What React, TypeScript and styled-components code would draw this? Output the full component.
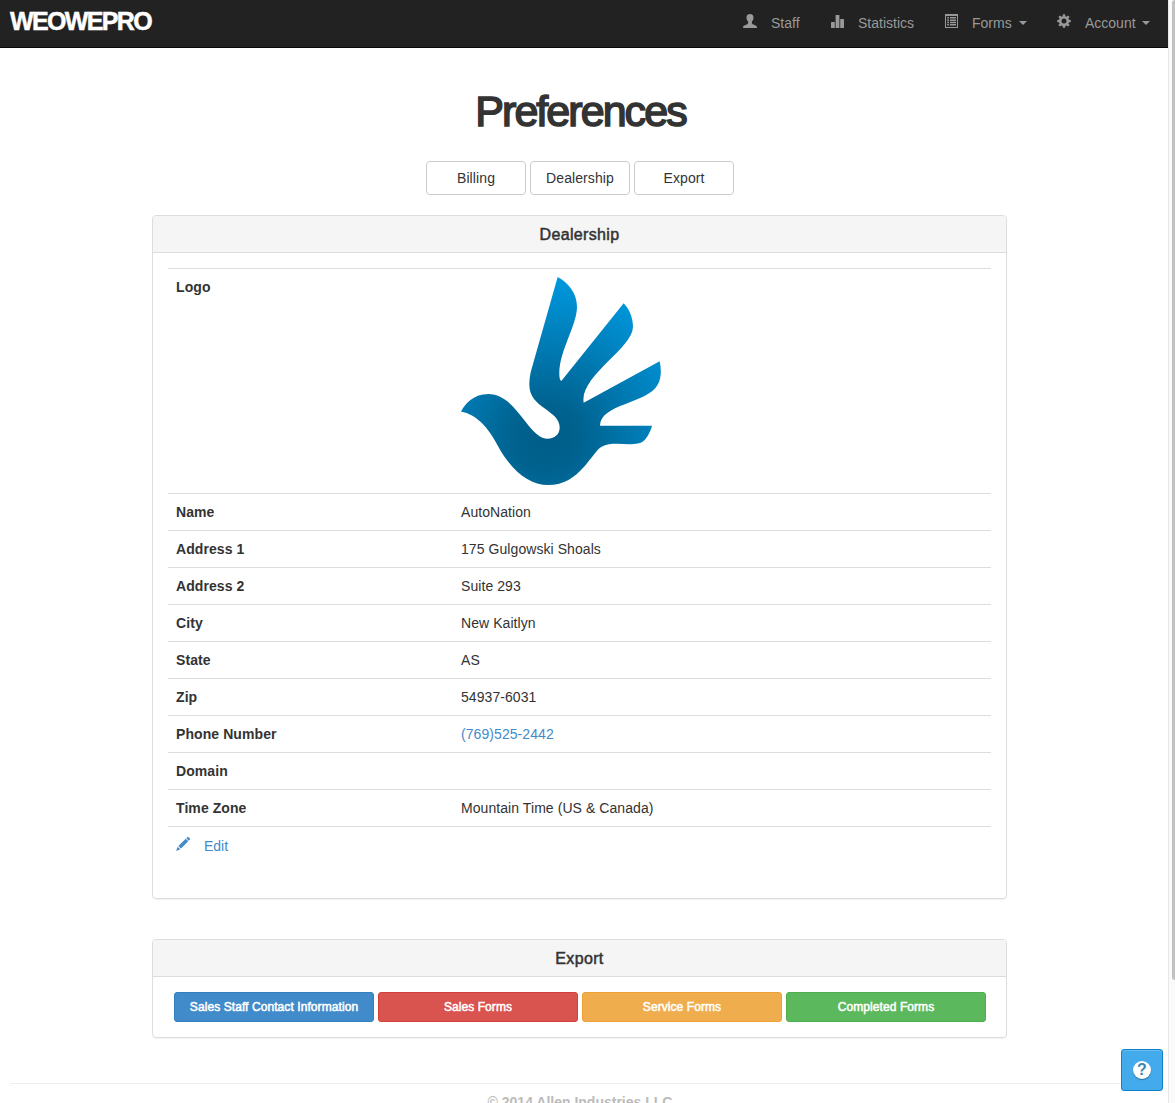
import React from "react";
import styled, { createGlobalStyle } from "styled-components";

const GlobalStyle = createGlobalStyle`
  *, *::before, *::after { box-sizing: border-box; }
  html, body { margin: 0; padding: 0; background: #fff; }
  body {
    overflow: hidden;
    font-family: "Liberation Sans", Arial, sans-serif;
    font-size: 14px;
    line-height: 20px;
    color: #333;
  }
`;

const Screen = styled.div`
  position: relative;
  display: grid;
  grid-template-columns: 1168px 7px;
  width: 1175px;
  height: 1103px;
  overflow: hidden;
`;

const Page = styled.div`
  display: flex;
  flex-direction: column;
  min-width: 0;
`;

const ScrollTrack = styled.div`
  display: flex;
  justify-content: flex-end;
  border-left: 1px solid #e8e8e8;
  background: #fafafa;
`;

const ScrollThumb = styled.div`
  width: 3px;
  height: 980px;
  background: #c1c1c1;
  border-radius: 3px 0 0 3px;
`;

const Navbar = styled.header`
  display: flex;
  flex: none;
  justify-content: space-between;
  height: 48px;
  padding: 0 18px 0 10px;
  background: #222;
  border-bottom: 1px solid #080808;
`;

const Brand = styled.a`
  padding-top: 11px;
  font-size: 25px;
  font-weight: 700;
  letter-spacing: -1.65px;
  color: #fff;
  -webkit-text-stroke: 0.5px #fff;
`;

const Nav = styled.nav`
  display: flex;
  gap: 30px;
`;

const NavItem = styled.a<{ $width: number }>`
  display: flex;
  width: ${(p) => p.$width}px;
  padding-top: 13px;
  color: #999;
  white-space: nowrap;

  svg { flex: none; margin: 1px 14px 0 0; }
`;

const Caret = styled.i`
  width: 8px;
  height: 4px;
  margin: 8px 0 0 auto;
  border: 4px solid transparent;
  border-top-color: currentColor;
  border-bottom: 0;
`;

const Container = styled.main`
  display: flex;
  flex-direction: column;
  align-items: center;
  width: 1140px;
  margin-left: 10px;
`;

const Title = styled.h1`
  margin: 40px 0 0 1px;
  font-size: 43px;
  line-height: 46px;
  font-weight: 400;
  letter-spacing: -1.95px;
  -webkit-text-stroke: 1.6px #333;
`;

const Tabs = styled.div`
  display: flex;
  gap: 4px;
  margin-top: 27px;
`;

const TabButton = styled.button`
  width: 100px;
  height: 34px;
  padding: 0;
  font: inherit;
  letter-spacing: 0.1px;
  color: #333;
  background: #fff;
  border: 1px solid #ccc;
  border-radius: 4px;
`;

const Panel = styled.section<{ $height: number; $top: number }>`
  width: 855px;
  height: ${(p) => p.$height}px;
  margin-top: ${(p) => p.$top}px;
  margin-right: 1px;
  border: 1px solid #ddd;
  border-radius: 4px;
  box-shadow: 0 1px 1px rgba(0, 0, 0, 0.05);
`;

const PanelHeading = styled.h3`
  height: 37px;
  margin: 0;
  padding-top: 9px;
  background: #f5f5f5;
  border-bottom: 1px solid #ddd;
  border-radius: 3px 3px 0 0;
  font-size: 16px;
  font-weight: 400;
  letter-spacing: 0.35px;
  text-align: center;
  -webkit-text-stroke: 0.5px #333;
`;

const Details = styled.dl`
  margin: 15px 15px 0;
`;

const DetailRow = styled.div<{ $height?: number }>`
  display: grid;
  grid-template-columns: 285px 1fr;
  height: ${(p) => p.$height ?? 37}px;
  padding: 8px 8px 0;
  border-top: 1px solid #ddd;
`;

const Label = styled.dt`
  font-weight: 700;
  letter-spacing: 0.08px;
`;

const Value = styled.dd`
  margin: 0;
  letter-spacing: 0.07px;

  svg { display: block; }
`;

const Link = styled.a`
  color: #428bca;
`;

const EditLink = styled(Link)`
  display: flex;

  svg { flex: none; margin: 2px 14px 0 0; }
  span { padding-top: 1px; }
`;

const ExportButtons = styled.div`
  display: flex;
  gap: 4px;
  padding: 15px 21px;
`;

const ExportButton = styled.button<{ $fill: string; $edge: string }>`
  width: 200px;
  height: 30px;
  padding: 0;
  flex: none;
  font: 400 12px/18px "Liberation Sans", Arial, sans-serif;
  letter-spacing: 0.08px;
  color: #fff;
  background: ${(p) => p.$fill};
  border: 1px solid ${(p) => p.$edge};
  border-radius: 3px;
  -webkit-text-stroke: 0.5px #fff;
`;

const Footer = styled.footer`
  width: 1140px;
  margin-top: 45px;
  padding-top: 8px;
  border-top: 1px solid #eee;
  font-weight: 700;
  color: #bbb;
  text-align: center;
`;

const HelpButton = styled.button`
  position: absolute;
  left: 1121px;
  top: 1049px;
  display: grid;
  place-items: center;
  width: 42px;
  height: 42px;
  padding: 0;
  background: #43aaeb;
  border: 1px solid #1181cb;
  border-radius: 3px;
  box-shadow: inset 0 1px 0 #69bcf0;
`;

const HelpMark = styled.span`
  display: grid;
  place-items: center;
  width: 18px;
  height: 18px;
  border-radius: 50%;
  background: #fff;
  box-shadow: 0 1px 1px rgba(0, 0, 0, 0.35);
  font: 700 16px/18px "Liberation Sans", Arial, sans-serif;
  color: #3d87b5;
`;

const Icon = ({ children }: { children: React.ReactNode }) => (
  <svg width="14" height="14" viewBox="0 0 14 14" fill="currentColor">{children}</svg>
);

const UserIcon = () => (
  <Icon>
    <path d="M7 0C4.7 0 3.4 1.4 3.5 3.6C3.5 5.4 4.2 6.8 5.1 7.6V9.1C5.1 9.7 4.6 10 3.8 10.4L1.3 11.4C.4 11.8 0 12.5 0 14H14C14 12.5 13.6 11.8 12.7 11.4L10.2 10.4C9.4 10 8.9 9.7 8.9 9.1V7.6C9.8 6.8 10.5 5.4 10.5 3.6C10.6 1.4 9.3 0 7 0Z" />
  </Icon>
);

const StatsIcon = () => (
  <Icon>
    <rect x="1" y="8" width="3.8" height="6" rx=".6" />
    <rect x="5.6" y="1" width="3.8" height="13" rx=".6" />
    <rect x="10.2" y="5" width="3.8" height="9" rx=".6" />
  </Icon>
);

const ListIcon = () => (
  <Icon>
    <path fillRule="evenodd" d="M1 0H14V14H1ZM2 2V13H13V2Z" />
    <path d="M3.2 3.1H5V4.6H3.2ZM6 3.1H12V4.6H6ZM3.2 5.4H5V6.9H3.2ZM6 5.4H12V6.9H6ZM3.2 7.7H5V9.2H3.2ZM6 7.7H12V9.2H6ZM3.2 10H5V11.5H3.2ZM6 10H12V11.5H6Z" />
  </Icon>
);

const CogIcon = () => (
  <Icon>
    <path
      fillRule="evenodd"
      d="M5.9 .3H8.1L8.4 2.2L9.5 2.7L11.1 1.5L12.6 3L11.4 4.6L11.9 5.7L13.8 6V8.1L11.9 8.4L11.4 9.5L12.6 11.1L11.1 12.6L9.5 11.4L8.4 11.9L8.1 13.8H5.9L5.6 11.9L4.5 11.4L2.9 12.6L1.4 11.1L2.6 9.5L2.1 8.4L.2 8.1V6L2.1 5.7L2.6 4.6L1.4 3L2.9 1.5L4.5 2.7L5.6 2.2ZM7 4.5A2.5 2.5 0 1 0 7 9.5A2.5 2.5 0 1 0 7 4.5Z"
    />
  </Icon>
);

const PencilIcon = () => (
  <Icon>
    <path d="M11.2 .3Q12 -.3 12.7 .3L13.7 1.3Q14.3 2 13.7 2.8L12.8 3.7L10.3 1.2ZM9.7 1.7L12.3 4.3L5 11.6L2.4 9ZM1.7 9.7L4.3 12.3L0 14Z" />
  </Icon>
);

const DoveLogo = () => (
  <svg width="200" height="208" viewBox="33 36 600 624">
    <defs>
      <radialGradient id="dove" gradientUnits="userSpaceOnUse" cx="290" cy="520" r="500">
        <stop offset="0" stopColor="#005d88" />
        <stop offset=".2" stopColor="#00628f" />
        <stop offset="1" stopColor="#009ae2" />
      </radialGradient>
    </defs>
    <path
      fill="url(#dove)"
      d="M323 36C354 52 381 84 381 125C381 185 319 270 329 340Q330 346 334 348L521 115C537 131 549 157 549 185C549 250 388 333 401 413L629 289C634 312 635 338 623 359C590 417 452 415 450 482H606C603 494 595 515 580 529C556 548 489 526 455 545C424 562 390 660 295 660C236 660 184 615 145 545C105 465 60 443 33 440C45 415 72 387 115 387C200 387 235 521 293 521C315 521 329 508 329 487C329 434 237 430 238 358C238 345 240 330 243 318Z"
    />
  </svg>
);

const details: { label: string; value: string; link?: boolean }[] = [
  { label: "Name", value: "AutoNation" },
  { label: "Address 1", value: "175 Gulgowski Shoals" },
  { label: "Address 2", value: "Suite 293" },
  { label: "City", value: "New Kaitlyn" },
  { label: "State", value: "AS" },
  { label: "Zip", value: "54937-6031" },
  { label: "Phone Number", value: "(769)525-2442", link: true },
  { label: "Domain", value: "" },
  { label: "Time Zone", value: "Mountain Time (US & Canada)" },
];

const exportsList = [
  { label: "Sales Staff Contact Information", fill: "#428bca", edge: "#357ebd" },
  { label: "Sales Forms", fill: "#d9534f", edge: "#d43f3a" },
  { label: "Service Forms", fill: "#f0ad4e", edge: "#eea236" },
  { label: "Completed Forms", fill: "#5cb85c", edge: "#4cae4c" },
];

export default function App() {
  return (
    <Screen>
      <GlobalStyle />
      <Page>
        <Navbar>
          <Brand>WEOWEPRO</Brand>
          <Nav>
            <NavItem $width={57}><UserIcon />Staff</NavItem>
            <NavItem $width={84}><StatsIcon />Statistics</NavItem>
            <NavItem $width={83}><ListIcon />Forms<Caret /></NavItem>
            <NavItem $width={93}><CogIcon />Account<Caret /></NavItem>
          </Nav>
        </Navbar>
        <Container>
          <Title>Preferences</Title>
          <Tabs>
            <TabButton>Billing</TabButton>
            <TabButton>Dealership</TabButton>
            <TabButton>Export</TabButton>
          </Tabs>
          <Panel $height={684} $top={20}>
            <PanelHeading>Dealership</PanelHeading>
            <Details>
              <DetailRow $height={225}>
                <Label>Logo</Label>
                <Value><DoveLogo /></Value>
              </DetailRow>
              {details.map((d) => (
                <DetailRow key={d.label}>
                  <Label>{d.label}</Label>
                  <Value>{d.link ? <Link>{d.value}</Link> : d.value}</Value>
                </DetailRow>
              ))}
              <DetailRow>
                <EditLink><PencilIcon /><span>Edit</span></EditLink>
              </DetailRow>
            </Details>
          </Panel>
          <Panel $height={99} $top={40}>
            <PanelHeading>Export</PanelHeading>
            <ExportButtons>
              {exportsList.map((b) => (
                <ExportButton key={b.label} $fill={b.fill} $edge={b.edge}>{b.label}</ExportButton>
              ))}
            </ExportButtons>
          </Panel>
          <Footer>© 2014 Allen Industries LLC</Footer>
        </Container>
      </Page>
      <ScrollTrack><ScrollThumb /></ScrollTrack>
      <HelpButton><HelpMark>?</HelpMark></HelpButton>
    </Screen>
  );
}
